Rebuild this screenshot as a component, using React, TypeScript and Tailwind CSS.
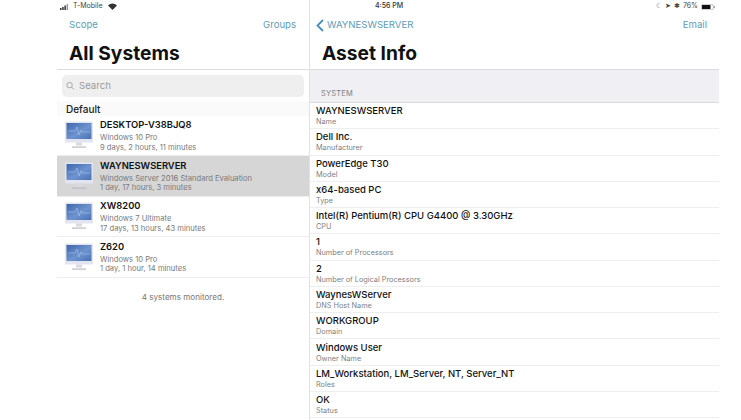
import React from "react";

const font = { fontFamily: "Inter, 'Liberation Sans', sans-serif" };

function Monitor() {
  return (
    <svg width="28" height="29" viewBox="0 0 28 29" className="shrink-0">
      <defs>
        <linearGradient id="scr" x1="0" y1="0" x2="1" y2="1">
          <stop offset="0" stopColor="#3d66ab" />
          <stop offset="0.55" stopColor="#6f94cf" />
          <stop offset="1" stopColor="#4871b6" />
        </linearGradient>
      </defs>
      <rect x="0" y="0.5" width="28" height="21" rx="1" fill="#e2e5f0" />
      <rect x="1.5" y="2" width="25" height="16" fill="url(#scr)" />
      <path d="M3 10h7l2-4 2 8 2-5 1 2h8" fill="none" stroke="#a9c4ec" strokeWidth="0.6" />
      <rect x="11" y="21.5" width="6" height="3" fill="#d8dae0" />
      <rect x="7" y="25.5" width="14" height="1.2" fill="#b9bcc4" />
    </svg>
  );
}

const systems = [
  { n: "DESKTOP-V38BJQ8", o: "Windows 10 Pro", u: "9 days, 2 hours, 11 minutes", h: "h-[40px]" },
  { n: "WAYNESWSERVER", o: "Windows Server 2016 Standard Evaluation", u: "1 day, 17 hours, 3 minutes", h: "h-[41px]", sel: true },
  { n: "XW8200", o: "Windows 7 Ultimate", u: "17 days, 13 hours, 43 minutes", h: "h-[40px]" },
  { n: "Z620", o: "Windows 10 Pro", u: "1 day, 1 hour, 14 minutes", h: "h-[41px]" },
];

const info = [
  ["WAYNESWSERVER", "Name"],
  ["Dell Inc.", "Manufacturer"],
  ["PowerEdge T30", "Model"],
  ["x64-based PC", "Type"],
  ["Intel(R) Pentium(R) CPU G4400 @ 3.30GHz", "CPU"],
  ["1", "Number of Processors"],
  ["2", "Number of Logical Processors"],
  ["WaynesWServer", "DNS Host Name"],
  ["WORKGROUP", "Domain"],
  ["Windows User", "Owner Name"],
  ["LM_Workstation, LM_Server, NT, Server_NT", "Roles"],
  ["OK", "Status"],
];

export default function App() {
  return (
    <div style={font} className="w-[741px] h-[420px] overflow-hidden bg-white flex pl-[57px] text-[#111]">
      <div className="w-[252px] shrink-0 flex flex-col">
        <div className="h-[13px] flex items-center gap-[4px] pl-[3px] text-[7px] text-[#444]">
          <svg width="9" height="6" viewBox="0 0 9 6"><rect x="0" y="4" width="1.5" height="2" fill="#333"/><rect x="2.2" y="3" width="1.5" height="3" fill="#333"/><rect x="4.4" y="1.5" width="1.5" height="4.5" fill="#333"/><rect x="6.6" y="0" width="1.5" height="6" fill="#999"/></svg>
          <span>T-Mobile</span>
          <svg width="9" height="7" viewBox="0 0 12 9" className="ml-[1px]"><path d="M6 9 0 3a8.5 8.5 0 0 1 12 0z" fill="#333"/></svg>
        </div>
        <div className="h-[24px] pt-[1px] flex items-center justify-between pl-[12px] pr-[13px] text-[9.6px] text-[#5d9cba]">
          <span>Scope</span><span>Groups</span>
        </div>
        <div className="h-[32px] pl-[12px] pt-[2px] text-[19.2px] leading-[28px] font-bold">All Systems</div>
        <div className="border-t border-[#dcdcdc] pt-[5px] px-[5px] h-[32px] shrink-0">
          <div className="h-[22px] rounded-[5px] bg-[#efeff0] flex items-center pl-[4px] gap-[4px] text-[9.6px] text-[#9b9b9b]">
            <svg width="9" height="10" viewBox="0 0 10 10" fill="none" stroke="#a3a3a3" strokeWidth="1"><circle cx="4" cy="4" r="3"/><path d="M6.2 6.2 9 9"/></svg>
            <span>Search</span>
          </div>
        </div>
        <div className="h-[15px] bg-[#fafafa] pl-[9px] pt-[1px] text-[10px] leading-[15px] font-medium text-[#222]">Default</div>
        {systems.map((s) => (
          <div key={s.n} className={`${s.h} flex items-center shrink-0 border-b border-[#eeeeee] pl-[8px] gap-[7px] ${s.sel ? "bg-[#d6d6d6]" : ""}`}>
            <Monitor />
            <div className="flex flex-col">
              <span className="text-[9.4px] leading-[12px] font-semibold text-[#111] pb-[2px]">{s.n}</span>
              <span className="text-[7.6px] leading-[9.5px] text-[#7a7a7a]">{s.o}</span>
              <span className="text-[7.6px] leading-[9.5px] text-[#7a7a7a]">{s.u}</span>
            </div>
          </div>
        ))}
        <div className="text-center text-[8.1px] text-[#777] pt-[13px]">4 systems monitored.</div>
      </div>
      <div className="w-[410px] shrink-0 border-l border-[#e2e2e2] flex flex-col">
        <div className="h-[13px] relative flex items-center justify-end pr-[4px] gap-[3px] text-[7px] text-[#444]">
          <span className="absolute left-[65px] font-medium text-[#333]">4:56 PM</span>
          <span className="text-[7px] text-[#777]">☾</span>
          <span className="text-[7px]">➤</span>
          <span className="text-[7px]">✱</span>
          <span>76%</span>
          <svg width="14" height="6" viewBox="0 0 14 6"><rect x="0.3" y="0.3" width="12" height="5.4" rx="1.3" fill="none" stroke="#888" strokeWidth="0.5"/><rect x="1" y="1" width="8.5" height="4" fill="#111"/><rect x="12.8" y="2" width="1" height="2" fill="#888"/></svg>
        </div>
        <div className="h-[24px] pt-[1px] flex items-center justify-between pl-[6px] pr-[12px] text-[9.6px] text-[#5d9cba]">
          <span className="flex items-center gap-[3px]">
            <svg width="8" height="13" viewBox="0 0 8 13" fill="none" stroke="#4a8fb5" strokeWidth="1.8"><path d="M7 1 1.5 6.5 7 12"/></svg>
            WAYNESWSERVER
          </span>
          <span>Email</span>
        </div>
        <div className="h-[32px] pl-[12px] pt-[2px] text-[19.2px] leading-[28px] font-bold">Asset Info</div>
        <div className="h-[34px] shrink-0 border-t border-b border-[#dcdcdc] bg-[#efeff4] flex items-end pl-[11px] pb-[3px] text-[7.5px] text-[#808080] tracking-[0.2px]">SYSTEM</div>
        {info.map(([v, l]) => (
          <div key={l} className="h-[26.27px] shrink-0 border-b border-[#eeeeee] pl-[6px] pb-[1px] flex flex-col justify-center">
            <span className="text-[9.5px] leading-[13px] font-medium text-[#111]">{v}</span>
            <span className="text-[7.3px] leading-[9px] text-[#808080]">{l}</span>
          </div>
        ))}
      </div>
    </div>
  );
}
